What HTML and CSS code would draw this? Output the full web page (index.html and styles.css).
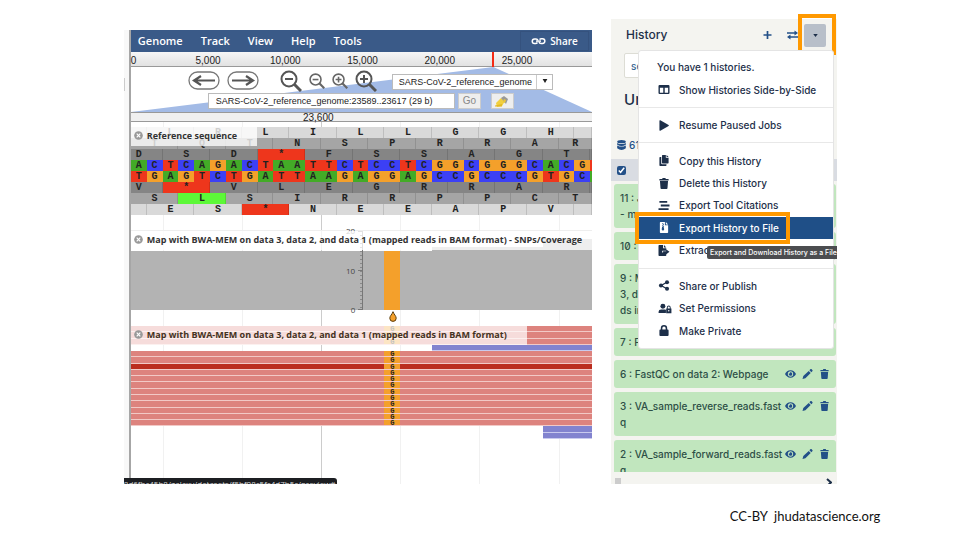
FILE: index.html
```html
<!DOCTYPE html>
<html lang="en">
<head>
<meta charset="utf-8">
<title>Genome browser and history</title>
<link rel="stylesheet" href="styles.css">
</head>
<body>
<svg class="sprite" aria-hidden="true">
  <symbol id="eye" viewBox="0 0 12 10"><path fill-rule="evenodd" d="M6 1C3.2 1 1.2 2.8 0 5c1.200 2.200 3.200 4 6 4s4.800-1.800 6-4C10.800 2.800 8.800 1 6 1zM6 2.100a2.900 2.900 0 1 1 0 5.800 2.900 2.900 0 0 1 0-5.800zM6 3.200c-.2 0-.4 0-.6.1a1 1 0 0 1-1.200 1.200A1.900 1.900 0 1 0 6 3.200z"/></symbol>
  <symbol id="pencil" viewBox="0 0 10 10"><path d="M7.800.3a1 1 0 0 1 1.400 0l.6.6a1 1 0 0 1 0 1.400l-.9.9-2-2zM6.200 1.900l2 2-5.300 5.300L0 10l.8-2.900z"/></symbol>
  <symbol id="trash" viewBox="0 0 10 11"><path d="M.5 1h2.700L3.700 0h2.600l.5 1h2.700v1.500h-9zM1 3.300h8l-.5 7q-.1.700-.8.700H2.300q-.7 0-.8-.7z"/></symbol>
</svg>

<div class="slide">
  <section class="browser">
    <div class="gutter"></div>
    <div class="genome">
      <nav class="menubar">
        <button>Genome</button><button>Track</button><button>View</button><button>Help</button><button>Tools</button>
        <button class="share"><svg viewBox="0 0 14 8"><g fill="none" stroke="currentColor" stroke-width="1.500"><path d="M6 5.500Q5.200 6.500 4 6.500H3A2.200 2.200 0 0 1 3 2h1.500Q6 2 6.500 3.500M8 2.500Q8.800 1.700 10 1.700h1a2.300 2.300 0 0 1 0 4.700H9.500Q8 6.400 7.500 5"/><path d="M4.500 4.100h5"/></g></svg>Share</button>
      </nav>
      <div class="overview"><span class="zero">0</span><span>5,000</span><span>10,000</span><span>15,000</span><span>20,000</span><span>25,000</span><span class="rest"></span><i class="position"></i></div>
      <div class="navbox">
        <svg class="beam" viewBox="0 0 100 100" preserveAspectRatio="none"><path d="M78.600 0 100 100H0z" fill="#a3bbe6"/></svg>
        <div class="controls">
          <button class="pan" aria-label="Pan left"><svg viewBox="0 0 32 19"><rect x="1" y="1" width="30" height="17" rx="8.500" fill="#fff" stroke="#777" stroke-width="1.300"/><path d="M6 9.500h21M13 5 6 9.500l7 4.500" fill="none" stroke="#555" stroke-width="2.200"/></svg></button>
          <button class="pan" aria-label="Pan right"><svg viewBox="0 0 32 19"><rect x="1" y="1" width="30" height="17" rx="8.500" fill="#fff" stroke="#777" stroke-width="1.300"/><path d="M5 9.500h21M19 5l7 4.500-7 4.500" fill="none" stroke="#555" stroke-width="2.200"/></svg></button>
          <button class="zoom big first" aria-label="Zoom out far"><svg viewBox="0 0 22 22"><g fill="none" stroke="#555" stroke-width="2"><circle cx="9" cy="9" r="7.500"/><path d="M5 9h8"/><path d="m14.500 14.500 6.500 6.500" stroke-width="3"/></g></svg></button>
          <button class="zoom" aria-label="Zoom out"><svg viewBox="0 0 22 22"><g fill="none" stroke="#666" stroke-width="2.200"><circle cx="9" cy="9" r="7.500"/><path d="M5 9h8"/><path d="m14.500 14.500 6.500 6.500" stroke-width="3"/></g></svg></button>
          <button class="zoom" aria-label="Zoom in"><svg viewBox="0 0 22 22"><g fill="none" stroke="#666" stroke-width="2.200"><circle cx="9" cy="9" r="7.500"/><path d="M5 9h8M9 5v8"/><path d="m14.500 14.500 6.500 6.500" stroke-width="3"/></g></svg></button>
          <button class="zoom big" aria-label="Zoom in far"><svg viewBox="0 0 22 22"><g fill="none" stroke="#555" stroke-width="2"><circle cx="9" cy="9" r="7.500"/><path d="M5 9h8M9 5v8"/><path d="m14.500 14.500 6.500 6.500" stroke-width="3"/></g></svg></button>
          <div class="refseq"><select aria-label="Reference"><option>SARS-CoV-2_reference_genome</option></select><svg viewBox="0 0 6 5"><path d="M0 0h6L3 5z"/></svg></div>
        </div>
        <div class="controls second">
          <input class="location" aria-label="Location" value="SARS-CoV-2_reference_genome:23589..23617 (29 b)">
          <button class="box">Go</button>
          <button class="box marker" aria-label="Highlight"><svg viewBox="0 0 14 12"><path d="m1 8 5-5 4 3-3 5-5 1z" fill="#f1cf3e"/><path d="m6 3 3-2 4 3-2 5z" fill="#999"/><path d="m9 4 2 1-1 3-2-1z" fill="#e9c63a"/><path d="M0 10.500 7 9v2.500H0z" fill="#e3b923"/></svg></button>
        </div>
      </div>
      <div class="ruler"><span class="at">23,600</span><span></span></div>
      <div class="tracks">
        <div class="gridlines"><i></i><i></i><i class="major"></i><i></i><i></i><i></i><i></i></div>
        <div class="track reference">
          <h2 class="label"><svg viewBox="0 0 10 10"><circle cx="5" cy="5" r="4.800" fill="#999"/><path d="m3 3 4 4m0-4-4 4" stroke="#fff" stroke-width="1.300"/></svg>Reference sequence</h2>
          <div id="sequence"></div>
        </div>
        <div class="track coverage">
          <h2 class="label wide"><svg viewBox="0 0 10 10"><circle cx="5" cy="5" r="4.800" fill="#999"/><path d="m3 3 4 4m0-4-4 4" stroke="#fff" stroke-width="1.300"/></svg>Map with BWA-MEM on data 3, data 2, and data 1 (mapped reads in BAM format) - SNPs/Coverage</h2>
          <div class="bars" id="bars"></div>
          <div class="axis"><div class="numbers"><span>20</span><span>10</span><span>0</span></div><div class="ticks"></div></div>
          <svg class="drop" viewBox="0 0 8 11"><path d="M4 .7C3 3.500.8 5 .8 7.200a3.200 3.200 0 0 0 6.400 0C7.200 5 5 3.500 4 .7z" fill="#f5a02b" stroke="#5a3d0c"/></svg>
        </div>
        <div class="track alignments">
          <h2 class="label"><svg viewBox="0 0 10 10"><circle cx="5" cy="5" r="4.800" fill="#999"/><path d="m3 3 4 4m0-4-4 4" stroke="#fff" stroke-width="1.300"/></svg>Map with BWA-MEM on data 3, data 2, and data 1 (mapped reads in BAM format)</h2>
          <div class="reads" id="reads"></div>
        </div>
      </div>
    </div>
    <div class="status">8d6fbc45b8/galaxy/datasets/f5bf08c5fc4d7b5c/preview#</div>
  </section>

  <aside class="history">
    <header class="top">
      <h1>History</h1>
      <button class="tool" aria-label="New history"><svg viewBox="0 0 10 10"><path d="M5 1v8M1 5h8" stroke="currentColor" stroke-width="1.700"/></svg></button>
      <button class="tool" aria-label="Switch history"><svg viewBox="0 0 11 10"><path d="M0 3h8M11 7H3" stroke="currentColor" stroke-width="1.400"/><path d="m7.500.5 3.500 2.500-3.500 2.500zM3.500 4.500 0 7l3.500 2.500z" fill="currentColor"/></svg></button>
      <div class="options"><button class="caret" aria-label="History options"><svg viewBox="0 0 6 4"><path d="M0 0h6L3 4z"/></svg></button></div>
    </header>
    <input class="search" aria-label="Search datasets" value="se">
    <h2 class="name">Un</h2>
    <div class="size"><svg viewBox="0 0 10 11"><g fill="currentColor"><ellipse cx="5" cy="1.800" rx="4.800" ry="1.800"/><path d="M.2 3.200q4.800 2.600 9.600 0v2q-4.800 2.800-9.600 0zM.2 6q4.800 2.600 9.600 0v3.200q-4.800 3.600-9.600 0z"/></g></svg>61</div>
    <div class="selectbar"><input type="checkbox" checked aria-label="Select datasets"></div>
    <div class="datasets">
      <div class="item"><p>11 : J<br>- m</p></div>
      <div class="item"><p>10 :</p></div>
      <div class="item"><p>9 : M<br>3, da<br>ds in</p></div>
      <div class="item"><p>7 : F</p></div>
      <div class="item"><p>6 : FastQC on data 2: Webpage</p><div class="actions"><button aria-label="View"><svg><use href="#eye"/></svg></button><button aria-label="Edit"><svg><use href="#pencil"/></svg></button><button aria-label="Delete"><svg><use href="#trash"/></svg></button></div></div>
      <div class="item"><p>3 : VA_sample_reverse_reads.fast<br>q</p><div class="actions"><button aria-label="View"><svg><use href="#eye"/></svg></button><button aria-label="Edit"><svg><use href="#pencil"/></svg></button><button aria-label="Delete"><svg><use href="#trash"/></svg></button></div></div>
      <div class="item"><p>2 : VA_sample_forward_reads.fast<br>q</p><div class="actions"><button aria-label="View"><svg><use href="#eye"/></svg></button><button aria-label="Edit"><svg><use href="#pencil"/></svg></button><button aria-label="Delete"><svg><use href="#trash"/></svg></button></div></div>
    </div>
    <footer class="panelfoot"><i></i><svg viewBox="0 0 6 9"><path d="m1 1 4 3.500L1 8" fill="none" stroke="#1d2f49" stroke-width="2"/></svg></footer>

    <div class="menu">
      <p class="count">You have 1 histories.</p>
      <a href="#"><svg viewBox="0 0 12 12"><path fill-rule="evenodd" d="M1.200 1h9.600q1.200 0 1.200 1.200v7.600q0 1.200-1.200 1.200H1.200Q0 11 0 9.800V2.200Q0 1 1.200 1zM1.500 4v5.500h3.700V4zM6.800 4v5.500h3.700V4z"/></svg>Show Histories Side-by-Side</a>
      <hr>
      <a href="#"><svg viewBox="0 0 12 12"><path d="M1 1v10q0 1 1 .6l9-5q.8-.6 0-1.200L2 .4Q1 0 1 1z"/></svg>Resume Paused Jobs</a>
      <hr>
      <a href="#"><svg viewBox="0 0 12 12"><path d="M4.500 0H8v3h3v5.500q0 .7-.7.700H4.500q-.7 0-.7-.7V.7q0-.7.700-.7zM8.800 0 11 2.300H8.800zM1.700 2.200H3v7q0 .9.900.9h4.800v1.200q0 .7-.7.700H1.700q-.7 0-.7-.7V2.900q0-.7.700-.7z"/></svg>Copy this History</a>
      <a href="#"><svg viewBox="0 0 12 12"><path d="M1 1h3L4.500 0h3L8 1h3v1.600H1zM1.600 3.400h8.800l-.6 7.800q-.1.800-.9.800H3.100q-.8 0-.9-.8z"/></svg>Delete this History</a>
      <a href="#"><svg viewBox="0 0 12 12"><path d="M1 1h8.500v2H1zM2.500 5H12v2H2.500zM0 9h11v2H0z"/></svg>Export Tool Citations</a>
      <a href="#" class="active"><svg viewBox="0 0 12 12"><path fill-rule="evenodd" d="M2.200 0H7v3.500h3.500v7.700q0 .8-.8.800H2.300q-.8 0-.8-.8V.8q0-.8.700-.8zM4 1v1h1V1zM5 2v1h1V2zM4 3v1h1V3zM5 4v1h1V4zM4 5 3.500 8q0 1.300 1.400 1.300T6.200 8L5.500 5zM8 0l2.500 2.600H8z"/></svg>Export History to File</a>
      <a href="#"><svg viewBox="0 0 12 12"><path d="M.8 0H5v3.500h3.500v2.800H4v2h4.500v2.900q0 .8-.8.800H.8q-.8 0-.8-.8V.8Q0 0 .8 0zM6 0l2.500 2.600H6zM8.500 6.700V4.800l3.500 2.600L8.500 10V8.100H5V6.700z"/></svg>Extract Workflow</a>
      <hr>
      <a href="#"><svg viewBox="0 0 12 12"><path d="M9 2.500 3 6l6 3.500" fill="none" stroke="currentColor" stroke-width="1.400"/><circle cx="9.300" cy="2.400" r="2.200"/><circle cx="2.700" cy="6" r="2.200"/><circle cx="9.300" cy="9.600" r="2.200"/></svg>Share or Publish</a>
      <a href="#"><svg class="broad" viewBox="0 0 14 12"><circle cx="4.700" cy="3.500" r="2.700"/><path d="M0 11V9.500Q0 7 2.800 7h3.700q1 0 1.500.4V11z"/><path fill-rule="evenodd" d="M8.300 6H9V4.800a2.100 2.100 0 0 1 4.200 0V6h.8v5.300H8.300zM10 6h2.200V4.800q0-1-1.100-1T10 4.800zM11.100 7.600a.8.800 0 1 0 0 1.600.8.800 0 0 0 0-1.600z"/></svg>Set Permissions</a>
      <a href="#"><svg viewBox="0 0 12 12"><path fill-rule="evenodd" d="M2.500 5V3.500a3.500 3.500 0 0 1 7 0V5h.5q1 0 1 1v5q0 1-1 1H2q-1 0-1-1V6q0-1 1-1zM4.200 5h3.600V3.500q0-1.800-1.800-1.800T4.200 3.500z"/></svg>Make Private</a>
      <div class="outline"></div>
    </div>
    <div class="tooltip">Export and Download History as a File</div>
  </aside>
</div>
<p class="credit">CC-BY&nbsp; jhudatascience.org</p>
<script src="app.js"></script>
</body>
</html>
```
FILE: styles.css
```css
* { box-sizing: border-box; }
body { margin: 0; background: #fff; font-family: "Liberation Sans", Arial, sans-serif; color: #222; }
button { border: 0; padding: 0; background: none; font: inherit; color: inherit; }
h1, h2, p { margin: 0; font-weight: inherit; }
svg { display: block; fill: currentColor; }
.sprite { position: absolute; width: 0; height: 0; }

.slide { display: grid; grid-template-columns: minmax(0, 468fr) minmax(0, 226fr); column-gap: 2.7%; align-items: start; padding: 19px 12.8% 0 12.9%; }

/* genome browser */
.browser { position: relative; display: grid; grid-template-columns: 5px minmax(0, 1fr); margin-top: 11px; height: 454px; overflow: hidden; }
.gutter { background: linear-gradient(#ccc, #ccc) 0 48px / 1px 13px no-repeat, #f8f8f8; }
.genome { border-left: 2px solid #a6a6a6; min-width: 0; display: flex; flex-direction: column; }
.menubar { display: flex; align-items: center; gap: 18px; height: 22px; padding: 0 3px 0 7px; background: #3a5a88; color: #fff; font: 600 11px/22px "Open Sans", sans-serif; }
.share { display: flex; align-items: center; gap: 4px; margin-left: auto; padding: 0 10px; height: 20px; border: 1px solid #35527e; font-size: 10px; }
.share svg { width: 15px; height: 8px; }
.overview { position: relative; display: flex; height: 15px; border-bottom: 1px solid #999; background: linear-gradient(#f6f6f6, #e2e2e2); font-size: 10px; line-height: 17px; text-align: center; }
.overview span { flex: 10 1 0; }
.overview .zero { flex-grow: 5; text-align: left; }
.overview .rest { flex-grow: 4.7; }
.position { position: absolute; left: 78.4%; top: 0; width: 2px; height: 15px; background: #f32a15; }
.navbox { position: relative; height: 45px; padding: 2px 0 0 57px; }
.beam { position: absolute; inset: 0; width: 100%; height: 100%; }
.controls { position: relative; display: flex; align-items: center; gap: 7px; height: 23px; }
.controls button { flex: none; }
.pan svg { width: 32px; height: 19px; }
.zoom svg { width: 16px; height: 16px; }
.zoom.big svg { width: 22px; height: 22px; }
.zoom.first { margin-left: 14px; }
.refseq { position: relative; margin-left: 8px; }
.refseq select { appearance: none; width: 161px; height: 16px; padding: 0 6px; border: 1px solid #bbb; border-radius: 0; background: linear-gradient(#ccc, #ccc) 143px 0 / 1px 14px no-repeat, #fff; color: #222; font: 9px/14px "Liberation Sans", sans-serif; }
.refseq svg { position: absolute; right: 5px; top: 8px; width: 6px; height: 4px; }
.second { height: 18px; gap: 3px; margin-left: 20px; }
.location { width: 247px; height: 16px; padding: 0 7px; border: 1px solid #bbb; background: #fff; color: #222; font: 9px/14px "Liberation Sans", sans-serif; }
.box { width: 23px; height: 16px; border: 1px solid #ccc; background: #eee; color: #888; font-size: 10px; line-height: 14px; }
.marker { margin-left: 7px; }
.marker svg { width: 14px; height: 12px; margin: auto; }
.ruler { display: flex; height: 10px; border: solid #999; border-width: 1px 0; background: #f0f0f0; font-size: 10px; line-height: 10px; }
.ruler span { flex: 86 1 0; }
.ruler .at { flex-grow: 374; text-align: center; }
.tracks { position: relative; flex: 1; padding-top: 5px; }
.gridlines { position: absolute; inset: 0; display: flex; }
.gridlines i { flex: 5 1 0; box-shadow: 1px 0 #f1f1f1; }
.gridlines i:first-child { flex-grow: 2; }
.gridlines i:last-child { flex-grow: 2.1; box-shadow: none; }
.gridlines .major { box-shadow: 1px 0 #ccc; }
.track { position: relative; }
.label { position: absolute; z-index: 2; left: 0; top: 0; display: flex; align-items: center; gap: 4px; height: 19px; padding: 0 20px 2px 3px; background: rgba(255, 255, 255, .78); color: #333; font: 700 9px/17px "Open Sans", sans-serif; white-space: nowrap; }
.label svg { width: 9px; height: 9px; }
.reference { height: 103px; }
.row { display: flex; height: 11px; overflow: hidden; font: bold 10px/11px "Liberation Mono", monospace; text-align: center; color: #222; }
.row span { flex: 1 1 0; min-width: 0; overflow: hidden; }
.codons span { box-shadow: inset -1px 0 rgba(0, 0, 0, .12); }
.light { background: #d9d9d9; }
.mid { background: #a5a5a5; }
.dark { background: #858585; }
.row .edge { text-indent: 5px; text-align: left; }
.stop, .T { background: #ee361c; }
.start { background: #5df838; }
.A { background: #43ab27; }
.C { background: #3c40f5; }
.G { background: #f4a02b; }
.coverage { height: 96px; border-top: 1px solid #eee; }
.coverage .label { right: 0; padding-right: 0; }
.bars { display: flex; align-items: flex-end; height: 79px; }
.bars span { background: #b3b3b3; }
.bars .snp { background: #f4a02b; }
.axis { position: absolute; top: 0; left: 46.5%; display: flex; gap: 3px; height: 79px; }
.numbers { display: flex; flex-direction: column; justify-content: space-between; width: 10px; margin: -5px 0; color: #444; font: 8px/10px "Open Sans", sans-serif; text-align: right; }
.ticks { width: 5px; border-right: 1px solid #777; background: repeating-linear-gradient(#777 0 1px, transparent 1px 39px), repeating-linear-gradient(#888 0 1px, transparent 1px 4px) 2px 0 no-repeat; }
.drop { position: absolute; left: 56%; top: 80px; width: 8px; height: 11px; }
.alignments .label { background: rgba(255, 255, 255, .72); color: #432; }
.reads { display: grid; grid-template-rows: repeat(18, 1fr); height: 113px; }
.read { display: flex; min-height: 0; border-bottom: 1px solid #f2c9c6; font: bold 7px/6px "Liberation Mono", monospace; text-align: center; }
.read span { background: #dd837e; }
.read.strong span { background: #bb2d1e; }
.read.reverse { border: 0; }
.read.reverse span { border-bottom: 1px solid #c9caee; background: #8283cf; }
.read .gap { visibility: hidden; }
.read .snp, .read.strong .snp { background: #f4a02b; }
.status { position: absolute; left: 0; bottom: 0; width: 213px; height: 6px; padding-top: 2px; overflow: hidden; border-radius: 0 3px 0 0; background: #1c1e22; color: #ddd; font: 8px/8px "Open Sans", sans-serif; white-space: nowrap; }

/* history panel */
.history { position: relative; display: flex; flex-direction: column; height: 465px; background: #f4f4f0; color: #1d2f49; font: 500 10px/16px Inter, sans-serif; }
.top { display: flex; align-items: center; height: 32px; padding: 0 11px 0 15px; color: #235088; }
.top h1 { margin-right: auto; color: #1d2f49; font-size: 12px; }
.tool { margin-right: 14px; }
.tool svg { width: 11px; height: 10px; }
.options { position: relative; margin-left: -8px; }
.options::after { content: ""; position: absolute; inset: -10px -10px -8px -6px; border: 4px solid #ff9900; }
.caret { display: grid; place-items: center; width: 22px; height: 23px; border-radius: 2px; background: #b8bfc9; color: #1d2f49; }
.caret svg { width: 5px; height: 3px; }
.search { height: 25px; margin: 2px 13px 0; padding: 0 6px; border: 1px solid #ddddd5; border-radius: 2px; background: #fff; color: #36638f; font: inherit; }
.name { margin: 11px 13px 0; height: 22px; font-size: 15px; line-height: 22px; }
.size { display: flex; align-items: center; gap: 3px; margin-top: 26px; padding-left: 6px; height: 16px; color: #235088; }
.size svg { width: 9px; height: 10px; }
.selectbar { display: flex; flex: none; align-items: center; height: 22px; margin-top: 6px; padding-left: 6px; background: #d9dce2; }
.selectbar input { width: 9px; height: 9px; margin: 0; accent-color: #235088; }
.datasets { display: flex; flex: 1; flex-direction: column; gap: 4px; min-height: 0; overflow: hidden; padding: 3px 1px 0 3px; }
.item { display: flex; flex: none; justify-content: space-between; padding: 6px 6px; border-radius: 3px; background: #c1e6be; color: #2d4f46; white-space: nowrap; font-variant-numeric: slashed-zero; }
.actions { display: flex; gap: 6px; height: 16px; align-items: center; color: #235088; }
.actions svg { width: 11px; height: 10px; }
.panelfoot { display: flex; flex: none; justify-content: space-between; align-items: flex-end; height: 12px; padding: 0 5px 0 4px; overflow: hidden; }
.panelfoot i { width: 6px; height: 6px; background: #ccc; }
.panelfoot svg { flex: none; width: 6px; height: 9px; margin-bottom: -3px; }

.menu { position: absolute; top: 31px; left: 27px; right: 3px; display: flex; flex-direction: column; height: 299px; padding: 5px 0 6px; border: 1px solid #e4e4e4; border-radius: 3px; background: #fff; }
.menu > a, .count { display: flex; flex: 1; align-items: center; gap: 9px; padding-left: 19px; color: #1d2f49; text-decoration: none; white-space: nowrap; }
.count { padding-left: 18px; }
.menu svg { flex: none; width: 12px; height: 11px; }
.menu .broad { width: 14px; margin-right: -2px; }
.menu hr { width: 100%; height: 1px; margin: 6px 0; border: 0; background: #e8e8e8; }
.menu .active { background: #1f4f87; color: #fff; }
.outline { position: absolute; left: -4px; top: 161px; width: 155px; height: 32px; border: 4px solid #ff9900; }
.tooltip { position: absolute; top: 227px; left: 96px; right: 0; height: 13px; padding-left: 3px; overflow: hidden; border-radius: 2px 0 0 2px; background: #4c4d50; color: #fff; font-size: 7px; line-height: 13px; white-space: nowrap; }

.credit { margin: 23px 8.3% 0 0; color: #111; font: 13px/18px Lato, sans-serif; text-align: right; }
```
FILE: app.js
```js
// Each translation frame: [bases, letter, extra class], in units of one base.
const frame = (tone, lead, letters, tail) => {
  const cells = lead ? [lead] : [];
  for (const l of letters) cells.push([3, l, l === '*' ? 'stop' : '']);
  if (tail) cells.push(tail);
  return { tone, cells };
};
const bases = s => ({ tone: '', cells: [...s].map(b => [1, b, b]) });
const rows = [
  frame('light', [1, ''], 'LRLILLGGH', [1.1, '']),
  frame('mid', null, 'TQTNSPRRA', [2.1, 'R']),
  frame('dark', [2, 'D', 'edge'], 'SD*FSSAGT', [0.1, '']),
  bases('ACTCAGACTAATTCTCCTCGGCGGGCACG'),
  bases('TGAGTCTGATTAAGAGGAGCCGCCCGTGC'),
  frame('dark', [2, 'V', 'edge'], '*VLEGRRAR', [0.1, '']),
  frame('mid', null, 'SLSIRRPPC', [2.1, 'T']),
  frame('light', [1, ''], 'ES*NEEAPV', [1.1, ''])
];
rows[3].cells.push([0.1, '', 'T']);
rows[4].cells.push([0.1, '', 'A']);
rows[6].cells[1][2] = 'start';

const span = (grow, text, cls = '', extra = '') =>
  `<span class="${cls}" style="flex:${grow} 1 0;${extra}">${text}</span>`;

document.getElementById('sequence').innerHTML = rows.map(r =>
  `<div class="row ${r.tone ? 'codons ' + r.tone : ''}">` +
  r.cells.map(c => span(c[0], c[1], c[2])).join('') + '</div>').join('');

// Coverage depth per run of bases; the scale runs from 0 to 20.
const depth = [[16, 15], [1, 15, 'snp'], [2, 15], [7, 16], [3.1, 18]];
document.getElementById('bars').innerHTML =
  depth.map(d => span(d[0], '', d[2], `height:${d[1] * 5}%`)).join('');

const forward = strong => `<div class="read ${strong ? 'strong' : ''}">` +
  span(16, '') + span(1, 'G', 'snp') + span(12.1, '') + '</div>';
const reverse = from => '<div class="read reverse">' +
  span(from, '', 'gap') + span(29.1 - from, '') + '</div>';
let reads = forward().repeat(3) + reverse(19);
for (let i = 0; i < 12; i++) reads += forward(i === 2);
document.getElementById('reads').innerHTML = reads + reverse(26).repeat(2);
```
